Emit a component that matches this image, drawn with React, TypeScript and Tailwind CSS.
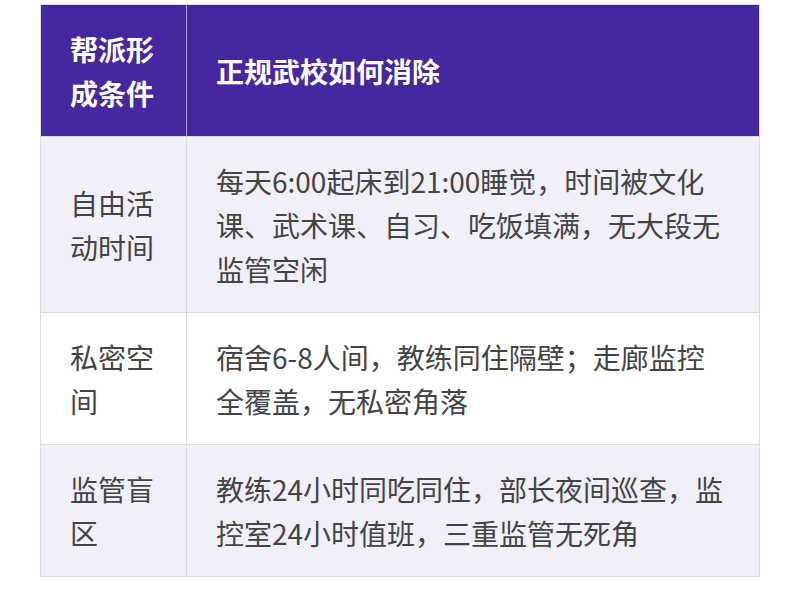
import React from "react";

const rows: { a: string[]; b: string[]; bg: string }[] = [
  {
    a: ["自由活", "动时间"],
    b: ["每天6:00起床到21:00睡觉，时间被文化", "课、武术课、自习、吃饭填满，无大段无", "监管空闲"],
    bg: "bg-[#f1eff9]",
  },
  {
    a: ["私密空", "间"],
    b: ["宿舍6-8人间，教练同住隔壁；走廊监控", "全覆盖，无私密角落"],
    bg: "bg-white",
  },
  {
    a: ["监管盲", "区"],
    b: ["教练24小时同吃同住，部长夜间巡查，监", "控室24小时值班，三重监管无死角"],
    bg: "bg-[#f1eff9]",
  },
];

export default function App() {
  return (
    <div
      className="w-[800px] h-[596px] bg-white pl-[40px] pt-[4px]"
      style={{ fontFamily: '"Noto Sans CJK SC", "Noto Sans", sans-serif' }}
    >
      <div className="w-[720px] border border-[#dcdcdc] text-[28px] leading-[44px]">
        <div className="grid grid-cols-[146px_1fr] bg-[#4527a0] text-white font-bold">
          <div className="px-[29px] py-[21.5px] border-r border-[#a99cd8]">
            <div>帮派形</div>
            <div>成条件</div>
          </div>
          <div className="px-[29px] py-[21.5px] flex items-center">正规武校如何消除</div>
        </div>
        {rows.map((r, i) => (
          <div
            key={i}
            className={`grid grid-cols-[146px_1fr] border-t border-[#dcdcdc] text-[#444444] ${r.bg}`}
          >
            <div className="px-[29px] py-[21.5px] border-r border-[#dcdcdc] flex flex-col justify-center">
              {r.a.map((t, j) => (
                <div key={j}>{t}</div>
              ))}
            </div>
            <div className="px-[29px] py-[21.5px] whitespace-nowrap">
              {r.b.map((t, j) => (
                <div key={j}>{t}</div>
              ))}
            </div>
          </div>
        ))}
      </div>
    </div>
  );
}
